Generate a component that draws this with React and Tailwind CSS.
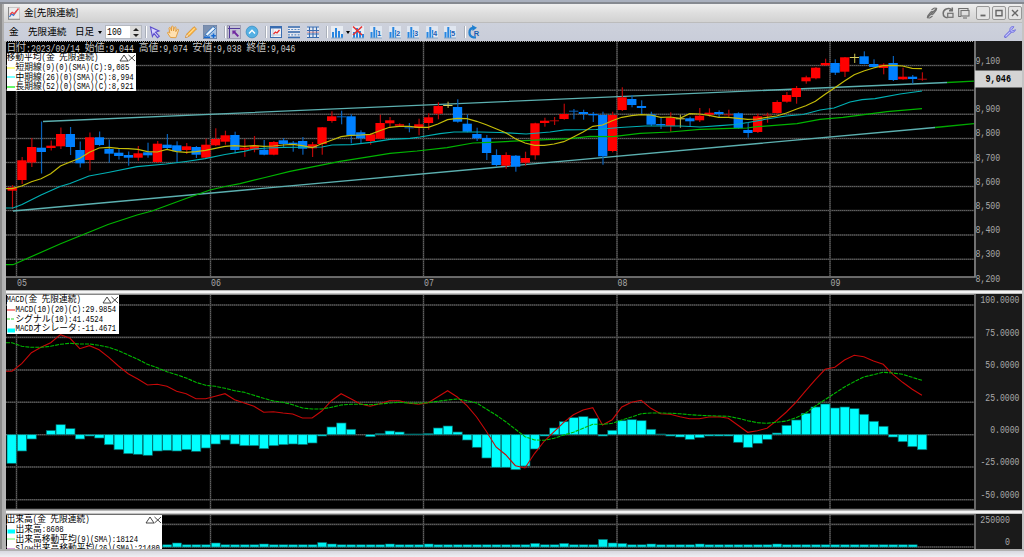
import React from "react";

const STEP = 9.68;
const ZERO = 434.7;
const barX = (i) => 12 + i * STEP;

// [body top, body bottom, high, low, direction]
const CANDLES = [
  [187.3, 190.7, 185, 209, "u"], [160.3, 180, 157, 184, "u"], [147, 162.5, 138, 167, "u"],
  [147.7, 152, 121.5, 173.5, "d"], [145.7, 148, 140.5, 150.5, "u"], [134, 146.3, 127.5, 149, "u"],
  [134, 147, 127, 155, "d"], [150, 163.3, 141.5, 167.5, "d"], [137.3, 160, 132.5, 170.5, "u"],
  [137.3, 145, 131.5, 146, "d"], [149, 153.7, 139.5, 162.7, "d"], [152.7, 156, 148.5, 159.5, "d"],
  [155, 157.7, 151.5, 165.7, "d"], [153.3, 157.7, 146, 160.7, "u"], [152.3, 155.3, 142.7, 157.7, "d"],
  [143.7, 162, 141, 163, "u"], [144.7, 148, 134, 149, "d"], [145.3, 151.3, 141.3, 162.7, "d"],
  [146.3, 150, 143, 154, "u"], [147, 154.7, 146, 158, "d"], [144.7, 157.7, 138.7, 158.3, "u"],
  [139, 145.3, 128.3, 146, "u"], [135.3, 141.7, 130.7, 144.7, "u"], [135, 150, 131.7, 153.3, "d"],
  [147.7, 149.8, 139, 156.8, "u"], [145.7, 149.7, 136, 152.3, "u"], [149.7, 154.7, 140, 155.3, "d"],
  [142, 154.7, 141, 155.3, "u"], [140.3, 144, 138, 148, "d"], [142.7, 144.3, 141, 151.7, "d"],
  [141, 148.7, 137, 154.7, "d"], [144.3, 148.3, 142, 157, "u"], [127.3, 144, 127, 154.7, "u"],
  [116.3, 121, 111.3, 122.7, "u"], [116.3, 117, 110.7, 124.3, "d"], [116.3, 136, 114.3, 143.3, "d"],
  [132.3, 138.3, 130.3, 144, "d"], [134.3, 141, 133.7, 144.7, "u"], [123, 138.7, 114.7, 139.3, "u"],
  [120.3, 123.3, 117, 126.7, "u"], [124.3, 125.7, 123.3, 126.3, "u"], [127.3, 128, 123, 132.3, "d"],
  [124.3, 128, 118.7, 135.3, "u"], [117.3, 123, 113.3, 129.7, "u"], [106, 113.7, 102.3, 119.3, "u"],
  [105, 106, 101.7, 108, "n"], [107, 121.7, 99.3, 122.7, "d"], [123.7, 131.7, 114.3, 132.3, "d"],
  [134, 138.3, 127.7, 141, "d"], [138, 153, 135, 160, "d"], [155, 165, 149.3, 166.7, "d"],
  [155, 165.7, 152.3, 168.7, "u"], [155.7, 166.7, 155, 171.7, "d"], [158, 162.7, 151.7, 165.7, "u"],
  [123.3, 155.3, 122.7, 159.7, "u"], [120.7, 123, 117.7, 126.7, "u"], [120.3, 121, 117, 125, "u"],
  [114, 119, 103.7, 119.7, "u"], [110.7, 111.3, 109, 119.3, "d"], [112, 114, 109.7, 119.7, "d"],
  [114, 115.3, 112, 122, "d"], [115, 156.3, 111.7, 164.7, "d"], [115, 151, 111.7, 152.3, "u"],
  [97.3, 110, 87.3, 111, "u"], [99, 105, 95, 107.3, "d"], [106, 108, 100.3, 114, "d"],
  [114.3, 124.7, 111.7, 126, "d"], [124, 125.3, 118, 129, "d"], [117.7, 126, 112.3, 131.7, "u"],
  [118.3, 119.3, 114.7, 127.7, "n"], [118.3, 121.3, 116.7, 126.7, "d"], [115.7, 120.3, 108, 122, "u"],
  [112.7, 114.7, 108.3, 116.7, "u"], [112, 114, 110.3, 117.3, "d"], [114.3, 115, 109.7, 116.7, "u"],
  [113.3, 128.3, 112.3, 129, "d"], [130, 133, 123, 137.7, "d"], [116.3, 132, 113.7, 133, "u"],
  [114.7, 115.3, 112.7, 122.7, "u"], [102, 113, 100.3, 113.7, "u"], [95, 101.7, 92, 102.7, "u"],
  [88, 97, 86, 103.7, "u"], [77.3, 81.3, 75.7, 83.7, "u"], [67.7, 78.3, 67, 79.3, "u"],
  [63, 65.3, 58.7, 66, "u"], [63, 72.7, 59.3, 75, "d"], [57.3, 71.7, 57, 77, "u"],
  [57, 57.8, 53.7, 63, "n"], [56.3, 64, 51.3, 64.3, "d"], [64, 67, 59.3, 67.7, "d"],
  [64.7, 68, 63.3, 74.3, "u"], [63, 80, 56, 81, "d"], [76.7, 79.3, 67.7, 79.7, "u"],
  [76.7, 79, 75, 83.7, "d"], [78.7, 79.3, 72.3, 80.7, "u"],
];

const SMA9 = [
  188.7, 186, 181.7, 178.7, 173.7, 166, 162, 158.3, 152.3, 148, 147.3, 148.3, 148.7, 149.3, 151.7,
  152, 149.3, 151.7, 152.3, 151.7, 150.3, 148.3, 146.3, 145.7, 146.3, 145.7, 146.3, 146, 145,
  144.3, 145.7, 147.7, 143.7, 140.3, 136.7, 135.3, 135, 134.3, 130.7, 127.3, 126.3, 126.3, 127.3,
  127.3, 124, 119.7, 118.3, 118.7, 121.3, 124.7, 128.7, 132.7, 138.7, 143, 145.3, 145.3, 144,
  141.7, 137, 132, 126.3, 125, 120.7, 117.3, 115.7, 114.7, 115, 117.3, 117, 118.3, 113.7, 114,
  115.3, 117.3, 117.3, 118.3, 119.3, 119, 117.3, 116, 113, 109.3, 105.7, 101.3, 94.3, 87.7, 81,
  74.7, 71, 68, 65.7, 65.3, 66, 68.3, 68.7,
];

const SMA26 =
  "6,208 13,208 22,204.5 41,195 60,186.5 70,183.5 89,176 108,172.5 137,166.7 166,164 186,161.5 205,158.7 225,154.5 244,151.3 254,149 268,148 283,147.3 322,147 332,145 351,144.7 371,142.3 390,139.3 410,138.3 420,137 440,133.7 454,132 480,132 500,132.5 526,134 550,132 565,129.8 596,129.5 620,127.5 645,126 680,126 700,127 720,125.7 735,124.5 748,122.5 767,119 786,116 803,114.5 820,110 834,108 850,102 862,99.7 875,98.7 900,94 922,91";

const SMA52 =
  "6,264.7 13,264.7 60,244 108,224.5 137,215 152,211 186,198.5 210,190 225,186.5 240,183.7 265,177.5 290,171.3 340,161.3 370,156.7 390,153.3 417,151 447,147.7 473,143 490,142.3 530,140.3 570,138.7 590,136.3 613,136.7 640,133.3 670,132 700,129.3 730,128.3 747,128 757,126.7 797,123.7 820,119.3 843,117.3 887,111.7 922,108.7";

const MACD = [
  371.3, 363.7, 352.7, 347.3, 342.7, 334.7, 338.3, 348.7, 345.7, 349.7, 357.3, 366, 373.7, 379,
  385, 384.3, 386.3, 391.3, 393.7, 398.7, 398.7, 396.3, 393.7, 399.7, 403, 406.3, 412.3, 411.7,
  413, 414, 418, 418, 411, 400.7, 393.7, 398.7, 404, 406.3, 403.7, 400.7, 400.7, 403.3, 404.3,
  402.7, 396.7, 390.7, 397, 405.7, 417, 431.3, 447, 454.7, 465.7, 468, 453.3, 441, 431.7, 422.3,
  414.7, 410, 407.7, 425, 419.7, 407, 402.3, 400.3, 408.3, 413.7, 414.3, 416.7, 418.7, 418.7, 417,
  416.7, 418.3, 425.3, 432.3, 430.7, 428.3, 420.5, 412, 402.2, 390.7, 379.7, 369.3, 367.3, 360,
  355.3, 356.7, 361, 364.3, 374.3, 382.3, 389.3, 395.3,
];

const SIGNAL = [
  342.7, 346.3, 347.3, 347.3, 346.3, 344.3, 343.3, 344, 344, 345.3, 347.3, 350.7, 355, 359.3,
  364.3, 367.7, 371.7, 374.7, 378, 382.3, 385.3, 386.3, 388.3, 390.7, 392.3, 395.3, 398.3, 401,
  402.3, 404.7, 408, 409, 409, 407.3, 405, 404.3, 404.3, 404.7, 404, 403, 402.3, 403, 403.3, 402.7,
  401.3, 400, 399, 400.7, 403, 409, 415, 421.7, 429.3, 436.7, 440, 440.3, 438.3, 435, 432.3, 428.3,
  424.3, 424.3, 423.3, 420, 417, 413.7, 413, 413, 413.3, 413.7, 414.7, 415.3, 415.7, 416, 416.3,
  418.3, 420.7, 422.7, 423.3, 422.3, 421, 417.7, 413, 406, 399.7, 393.3, 387, 381.7, 377, 374.7,
  372.3, 373, 374.3, 377.3, 380.3,
];

const OSC = [
  463.3, 451, 439, 434.7, 430.5, 424.7, 428.7, 439, 436, 438, 444.7, 449.7, 453.7, 454.3, 455.3,
  451, 450.3, 451, 449.7, 451.3, 448, 444, 440, 444, 445.7, 445.7, 448.7, 445.7, 444.7, 444, 444.5,
  443, 436, 427, 423, 429.3, 434.7, 436.7, 433.7, 431, 432, 434, 434, 433.7, 428, 426, 432, 440,
  447.3, 458, 467.3, 467.3, 469.7, 466, 449, 436, 428, 421.7, 417.7, 416.7, 418.3, 436, 430.3,
  420.7, 419.7, 420.7, 429.3, 434, 436, 437, 439.3, 437.7, 436, 436, 436, 442.3, 447.3, 443.3,
  439.3, 433, 425.3, 420, 413.3, 407, 404, 408, 407, 408.7, 414.3, 421.3, 426.3, 437, 441.7, 446.7,
  449.7,
];

const VOLUME_PEAKS = { 17: 4, 21: 4, 26: 3, 32: 4.5, 33: 3, 39: 3, 43: 3, 54: 3.6, 57: 3.6, 61: 7.6, 62: 4, 63: 3.5, 66: 3, 71: 3, 79: 3 };

const MONTHS = [
  [16.5, "05"],
  [210.5, "06"],
  [423.5, "07"],
  [617, "08"],
  [830, "09"],
];

const BODY = { u: "#ff0000", d: "#0080ff", n: "#d8d060" };
const WICK = { u: "#b80808", d: "#0860b8", n: "#a8a040" };

const toPoints = (ys) =>
  "6," + ys[0] + " " + ys.map((y, i) => `${barX(i).toFixed(1)},${y}`).join(" ");

const Grid = ({ rows, top, bottom }) => (
  <g>
    {rows.map((y) => (
      <g key={y}>
        <line x1="6" x2="974" y1={y} y2={y} stroke="#3a3a3a" strokeWidth="1.6" />
        <line x1="6" x2="974" y1={y} y2={y} stroke="#606060" strokeWidth="1" strokeDasharray="1 1" />
      </g>
    ))}
    {MONTHS.map(([x]) => (
      <g key={x}>
        <line x1={x} x2={x} y1={top} y2={bottom} stroke="#3a3a3a" strokeWidth="1.6" />
        <line x1={x} x2={x} y1={top} y2={bottom} stroke="#606060" strokeWidth="1" strokeDasharray="1 1" />
      </g>
    ))}
  </g>
);

const AxisText = ({ x, y, children, fill = "#a8a8a8", bold, unit = 4.95 }) => (
  <text
    x={x}
    y={y}
    fill={fill}
    fontSize="11"
    fontWeight={bold ? 700 : 400}
    fontFamily="'Liberation Mono', monospace"
    textLength={children.length * unit}
    lengthAdjust="spacingAndGlyphs"
  >
    {children}
  </text>
);

// Half-width runs take exactly half of a full-width character
const Mixed = ({ children, half }) =>
  children.split(/([ -~]+)/).map((part, i) =>
    /^[ -~]+$/.test(part) ? (
      <span key={i} className={half}>
        {part}
      </span>
    ) : (
      <span key={i}>{part}</span>
    )
  );

const LegendText = ({ children }) => (
  <span className="whitespace-pre">
    <Mixed half="inline-block scale-y-[1.25] font-['Liberation_Mono',monospace] text-[7.3px]">{children}</Mixed>
  </span>
);

const Legend = ({ title, rows, className }) => (
  <div
    className={
      "absolute left-[0.5px] bg-white font-['Noto_Sans_CJK_JP',sans-serif] text-[8.76px] text-black " +
      className
    }
  >
    <div className="flex h-[9.7px] items-center justify-between leading-none">
      <LegendText>{title}</LegendText>
      <svg width="17" height="8" viewBox="0 0 17 8" fill="none" stroke="#333" strokeWidth="0.9">
        <path d="M1 7 5 1l4 6zM9.5 1l6.5 6M16 1 9.5 7" />
      </svg>
    </div>
    {rows.map(([kind, color, text]) => (
      <div key={text} className="flex h-[9.7px] items-center leading-none">
        <svg className="mr-[1px] shrink-0" width="8" height="8" viewBox="0 0 8 8">
          {kind === "bar" ? (
            <rect x="0.5" y="3.5" width="7.5" height="4" fill={color} />
          ) : (
            <path d="M0 4h8" stroke={color} strokeWidth="1.2" strokeDasharray={kind === "dash" ? "3 1" : undefined} />
          )}
        </svg>
        <LegendText>{text}</LegendText>
      </div>
    ))}
  </div>
);

const PriceChart = () => (
  <div className="relative h-[249px] bg-[#1a1a1a]">
    <svg className="block" width="1016" height="249" viewBox="6 41 1016 249">
      <rect x="6" y="41" width="968" height="236" fill="#000" />
      <Grid rows={[65.5, 90.2, 114.3, 138.5, 162.5, 186.5, 210.5, 235, 259.3]} top={41} bottom={276} />
      <path d="M6 41.5h968" stroke="#aaa" strokeDasharray="1 1" />
      <path d="M43 121.5 947 82.5M13 211l922-83.5" stroke="#5cb0b0" strokeWidth="1.3" />
      <path d="M947 82.5l27-1.3M935 127.5l39-3.8" stroke="#00a800" strokeWidth="1.3" />
      {CANDLES.map(([top, bottom, high, low, dir], i) => (
        <g key={i}>
          <rect x={barX(i) - 0.1} y={high} width="1.2" height={low - high} fill={WICK[dir]} />
          <rect
            x={barX(i) - 4.7 < 6 ? 6 : barX(i) - 4.4}
            y={top}
            width="9.3"
            height={Math.max(bottom - top, 1)}
            fill={bottom - top < 1.1 && dir !== "n" ? WICK[dir] : BODY[dir]}
          />
        </g>
      ))}
      <g fill="none" strokeWidth="1.2">
        <polyline points={SMA52} stroke="#00b400" />
        <polyline points={SMA26} stroke="#00b0b4" />
        <polyline points={toPoints(SMA9)} stroke="#c4bc08" />
      </g>
      <path d="M6 277h969V41" fill="none" stroke="#888" strokeWidth="1.6" />
      {MONTHS.map(([x, label]) => (
        <AxisText key={label} x={x + 0.5} y={285.5}>
          {label}
        </AxisText>
      ))}
      {["9,100", "", "8,900", "8,800", "8,700", "8,600", "8,500", "8,400", "8,300", "8,200"].map(
        (label, i) =>
          label && (
            <AxisText key={label} x={975.5} y={63.7 + i * 24.2}>
              {label}
            </AxisText>
          )
      )}
      <rect x="975" y="70.5" width="47" height="17" fill="#d4d4d4" />
      <AxisText x={985.5} y={82} fill="#000" bold unit={5.1}>
        9,046
      </AxisText>
    </svg>
    <div className="absolute top-[1px] left-[0.5px] font-['Noto_Sans_CJK_JP',sans-serif] text-[9.8px] leading-[11px] whitespace-pre text-[#c8c8c8]">
      <Mixed half="inline-block scale-y-[1.25] font-['Liberation_Mono',monospace] text-[8.17px]">
        日付:2023/09/14 始値:9,044 高値:9,074 安値:9,038 終値:9,046
      </Mixed>
    </div>
    <Legend
      className="top-[12px] h-[38px] w-[129px]"
      title="移動平均(金 先限連続)"
      rows={[
        ["line", "#ffff40", "短期線(9)(0)(SMA)(C):9,085"],
        ["line", "#20ffff", "中期線(26)(0)(SMA)(C):8,994"],
        ["line", "#00f000", "長期線(52)(0)(SMA)(C):8,921"],
      ]}
    />
  </div>
);

const MacdChart = () => (
  <div className="relative h-[216px] bg-[#1a1a1a]">
    <svg className="block" width="1016" height="216" viewBox="6 294 1016 216">
      <rect x="6" y="294" width="968" height="216" fill="#000" />
      <Grid rows={[305, 337.4, 370, 402.2, 434.7, 467, 499.7]} top={295} bottom={509} />
      <path d="M6 294.5h968" stroke="#888" />
      {OSC.map((y, i) => (
        <rect
          key={i}
          x={i === 0 ? 7 : barX(i) - 4.4}
          y={Math.min(y, ZERO)}
          width="9.3"
          height={Math.abs(y - ZERO)}
          fill="#00ffff"
          stroke="#006c6c"
          strokeWidth="0.7"
        />
      ))}
      <g fill="none" strokeWidth="1.1">
        <polyline points={toPoints(MACD)} stroke="#c80808" />
        <polyline points={toPoints(SIGNAL)} stroke="#00b800" strokeDasharray="4 1" />
      </g>
      <path d="M6 509.5h968M975 294v216" fill="none" stroke="#888" strokeWidth="1.4" />
      {["100.0000", "75.0000", "50.0000", "25.0000", "0.0000", "-25.0000", "-50.0000"].map((label, i) => (
        <AxisText key={label} x={1019.5 - label.length * 4.88} y={303.3 + i * 32.4} unit={4.88}>
          {label}
        </AxisText>
      ))}
    </svg>
    <Legend
      className="top-[1px] h-[38.5px] w-[112px]"
      title="MACD(金 先限連続)"
      rows={[
        ["line", "#f04040", "MACD(10)(20)(C):29.9854"],
        ["dash", "#30d830", "シグナル(10):41.4524"],
        ["bar", "#00ffff", "MACDオシレータ:-11.4671"],
      ]}
    />
  </div>
);

const VolumeChart = () => (
  <div className="relative h-[35px] overflow-hidden bg-[#1a1a1a]">
    <svg className="block" width="1016" height="35" viewBox="6 514 1016 35">
      <rect x="6" y="514" width="968" height="35" fill="#000" />
      <Grid rows={[524.4, 547]} top={515} bottom={547} />
      <path d="M6 514.7h968" stroke="#888" />
      {Array.from({ length: 94 }, (_, i) => {
        const h = VOLUME_PEAKS[i] || 2.2;
        return (
          <rect key={i} x={barX(i) - 4} y={547 - h} width="8.9" height={h} fill="#00f0f0" stroke="#006c6c" strokeWidth="0.6" />
        );
      })}
      <path d="M975 514v35" stroke="#888" strokeWidth="1.4" />
      <AxisText x={980.3} y={522.9}>250000</AxisText>
      <AxisText x={1005} y={545.4}>0</AxisText>
    </svg>
    <Legend
      className="top-[1px] h-[34px] w-[155px]"
      title="出来高(金 先限連続)"
      rows={[
        ["bar", "#00ffff", "出来高:8608"],
        ["line", "#80ff80", "出来高移動平均(9)(SMA):18124"],
        ["line", "#c060c0", "Slow出来高移動平均(26)(SMA):21480"],
      ]}
    />
  </div>
);

const Icon = ({ children, className = "" }) => (
  <div className={"flex w-[18.4px] shrink-0 items-center justify-center " + className}>
    <svg width="14" height="14" viewBox="0 0 14 14" fill="none">
      {children}
    </svg>
  </div>
);

const Separator = () => <div className="h-[12px] w-[1.5px] shrink-0 border-l border-[#aab0ba] bg-white" />;

const Bars = () => (
  <>
    <rect x="1" y="1" width="12" height="12" fill="#e8ecf2" />
    <path d="M2 13V7h2v6zM5 13V3h2v10zM8 13V6h2v7zM11 13V9h2v4z" fill="#2886e0" />
    <path d="M1 13h12" stroke="#88a8c8" />
  </>
);

const Toolbar = () => (
  <div className="flex h-[18px] items-center bg-gradient-to-b from-[#cdd1dc] to-[#c9cdd9] font-['Noto_Sans_CJK_JP',sans-serif] text-[9.6px] leading-none text-black">
    <span className="ml-[5px] w-[19px]">金</span>
    <span className="w-[47px]">先限連続</span>
    <span className="w-[23px]">日足</span>
    <span className="h-0 w-0 border-x-[2.5px] border-t-[3px] border-x-transparent border-t-black" />
    <div className="ml-[3px] flex h-[14px] w-[37px] items-center justify-between border border-[#b4b8c0] bg-white pl-[1px]">
      <span className="inline-block scale-y-[1.35] font-['Liberation_Mono',monospace] text-[8.2px]">100</span>
      <span className="flex h-full w-[11px] flex-col items-center justify-center gap-[3px] bg-[#dcdcdc]">
        <span className="border-x-[3px] border-b-[3px] border-x-transparent border-b-[#222]" />
        <span className="border-x-[3px] border-t-[3px] border-x-transparent border-t-[#222]" />
      </span>
    </div>
    <div className="ml-[3px]"><Separator /></div>
    <Icon className="-ml-[1px]">
      <path d="M2.5 2l8.5 4-3.5 1.2 3.8 4-1.8 1.5-3.5-4.2-1.6 3z" fill="#d8d4ff" stroke="#5a4ccc" strokeWidth="1.1" />
    </Icon>
    <Icon>
      <path d="M4.5 12.5 1.5 8c0-1.2 1.5-1 2.3.2L3 3.2c.2-1 1.4-.8 1.6 0L5.5 6V1.7c.3-.9 1.5-.8 1.7 0L7.5 6l1-3.7c.4-.8 1.5-.5 1.5.4L9.8 6.6l1.5-2.2c.7-.6 1.6 0 1.2.8L10.5 11l-.6 1.7z" fill="#ffe0b0" stroke="#e09838" strokeWidth="0.9" />
    </Icon>
    <Icon>
      <path d="M1.5 12.5 2.8 9 10 1.7l2.5 2.2-7.2 7.3z" fill="#ffc050" stroke="#d88820" strokeWidth="0.8" />
      <path d="M1.5 12.5l1.2-3.2 2.3 2z" fill="#fff" stroke="#c88840" strokeWidth="0.6" />
      <path d="m4.2 9.7 6.3-6.4" stroke="#ffe0a0" strokeWidth="1" />
    </Icon>
    <Icon>
      <rect x="0.2" y="0.2" width="13.6" height="13.6" fill="#7c90b0" stroke="#60789c" strokeWidth="0.6" />
      <path d="M1 13h12V2z" fill="#a8c4e4" />
      <path d="M2 9.5 10 1.5l2.5 2L4.5 11z" fill="#e8f4ff" stroke="#2068b8" strokeWidth="0.9" />
      <path d="M1 12.2h6M10.5 8.5v4.5M8.3 10.8h4.5" stroke="#1468d0" strokeWidth="1.5" />
    </Icon>
    <div className="ml-[5px]"><Separator /></div>
    <Icon className="-ml-[1px]">
      <rect x="0.5" y="0.5" width="13" height="13" fill="#c4c2d4" stroke="#a0a0b4" />
      <path d="M2.5 1v12M1 3.5h12" stroke="#503898" strokeWidth="1" />
      <path d="M5.3 5.5h4.2L8.3 6.8l3.7 3.9-1.4 1.3L7 8.2 5.5 9.5z" fill="#7028a0" />
    </Icon>
    <Icon>
      <circle cx="7" cy="7" r="5.9" fill="#54b0e4" stroke="#3c90c4" strokeWidth="0.8" />
      <path d="M4 8.5 7 5.3l3 3.2" stroke="#fff" strokeWidth="1.4" />
    </Icon>
    <div className="ml-[4px]"><Separator /></div>
    <Icon>
      <rect x="1.5" y="1.5" width="11" height="11" fill="#f0f2f8" stroke="#386cb0" />
      <path d="M1 2.5h12" stroke="#386cb0" strokeWidth="2" />
      <path d="M4 4v8M2 10h10" stroke="#a8b8d0" strokeWidth="0.7" />
      <path d="m4.5 9 2-2 1.5 1L10.5 5" stroke="#e83030" strokeWidth="1.3" />
    </Icon>
    <Icon>
      <path d="M1 2h12M1 7h12M1 12.5h12" stroke="#386cb0" strokeWidth="1.3" />
      <path d="M1 4.5h12M1 9.8h12" stroke="#f2f4fa" strokeWidth="2.4" />
      <path d="M1 4.5h12M1 9.8h12" stroke="#5a88c0" strokeWidth="1.2" strokeDasharray="2 1.2" />
    </Icon>
    <Icon>
      <rect x="1" y="1.5" width="12" height="11" fill="#e4eaf4" />
      <path d="M1 2h12M1 5.5h12M1 9h12M1 12.5h12M3.5 1.5v11M7 1.5v11M10.5 1.5v11" stroke="#386cb0" strokeWidth="1.1" />
      <path d="M1 7.2h12" stroke="#d07070" strokeWidth="0.7" />
    </Icon>
    <div className="ml-[4px]"><Separator /></div>
    <Icon>
      <Bars />
    </Icon>
    <span className="mr-[1px] h-0 w-0 border-x-[2.5px] border-t-[3px] border-x-transparent border-t-black" />
    <Icon className="-ml-[2px]">
      <Bars />
      <path d="m2 1.5 9 8.5M11 1.5 2 10" stroke="#e83030" strokeWidth="1.6" />
    </Icon>
    {["1", "2", "3", "4", "5"].map((n) => (
      <Icon key={n}>
        <rect x="1" y="1" width="12" height="12" fill="#e0e6f0" />
        <path d="M1.5 13V7h2v6zM4.3 13V2h2v11zM7 13V5h1.3v8z" fill="#2886e0" />
        <path d="M1 13h12" stroke="#88a8c8" />
        <text x="8" y="11" fontSize="7.5" fontWeight="700" fill="#1c60b8" stroke="#e0e6f0" strokeWidth="1.2" paintOrder="stroke" fontFamily="'Liberation Sans', sans-serif">
          {n}
        </text>
      </Icon>
    ))}
    <div className="ml-[5px]"><Separator /></div>
    <Icon className="-ml-[1px]">
      <path d="M6 3C1.5 3.5 1 11.5 6.5 12.3H9" stroke="#2080d0" strokeWidth="2.3" />
      <path d="m5 0 5 2.8L5.5 6z" fill="#2080d0" />
      <text x="6.8" y="10.8" fontSize="7.5" fontWeight="700" fill="#1860b0" fontFamily="'Liberation Sans', sans-serif">
        R
      </text>
    </Icon>
    <Icon className="mr-[3px] ml-auto">
      <path d="M2.5 11.5 7.5 6.7" stroke="#7070dc" strokeWidth="3" strokeLinecap="round" />
      <path d="M2.5 11.5 7.5 6.7" stroke="#c8c8ff" strokeWidth="1.1" />
      <path d="M11 1.8C8.5.8 6.3 3 7 5.5c.8 2.5 4.6 2.7 5.5-.8L10 5.8 8.8 4.5z" fill="#b4b4fa" stroke="#7070dc" strokeWidth="0.9" />
    </Icon>
  </div>
);

const WindowButton = ({ children, className }) => (
  <div className={"flex h-[14px] items-center justify-center rounded-[2px] border border-[#989898] bg-[#e4e4e4] " + className}>
    <svg width="10" height="10" viewBox="0 0 10 10" fill="none" stroke="#666" strokeWidth="1.4">
      {children}
    </svg>
  </div>
);

const TitleBar = () => (
  <div className="flex h-[18px] items-center bg-gradient-to-b from-[#efefef] via-[#dedede] to-[#d2d2d2]">
    <svg className="ml-[4px]" width="12" height="13" viewBox="0 0 12 13" fill="none">
      <rect x="0.5" y="0.5" width="11" height="12" fill="#ececec" stroke="#b8b8b8" strokeWidth="0.7" />
      <path d="M.5 0v12.3H12" stroke="#888" strokeWidth="1.1" />
      <path d="m1.5 10 2-3 2 1.3 3-4.5" stroke="#3878d0" strokeWidth="1.3" />
      <path d="m2 7.5 2.2-2.2 2 1.5L10.5 1.5" stroke="#f04040" strokeWidth="1.3" />
    </svg>
    <span className="ml-[4px] font-['Noto_Sans_CJK_JP',sans-serif] text-[9.6px] leading-none text-black">
      金[先限連続]
    </span>
    <div className="ml-auto flex items-center">
      <svg width="12" height="12" viewBox="0 0 12 12" fill="none" stroke="#707070" strokeWidth="1.2">
        <path d="M5.5 3 8 1.2c2-.7 3 .8 2 2.3L7.5 6.7C6.5 7.8 5 7.5 4.8 6.3M6.5 9 4 10.8c-2 .7-3-.8-2-2.3l2.5-3.2c1-1.1 2.5-.8 2.7.4M1 11 11 1" />
      </svg>
      <svg className="ml-[4px]" width="12" height="12" viewBox="0 0 12 12" fill="none" stroke="#707070" strokeWidth="1.5">
        <path d="M9.5 2.8C6.5.3 1.2 2 1.2 6.3c0 2.6 1.8 4.4 4.3 4.4M10.3.5v3.3H7" />
        <rect x="5.7" y="6.3" width="5.3" height="4" strokeWidth="1.2" />
      </svg>
      <svg className="ml-[4px]" width="12" height="12" viewBox="0 0 12 12" fill="none" stroke="#707070" strokeWidth="1.1">
        <path d="M3 9.5H.7v-8H10V3" />
        <rect x="3" y="3.5" width="8" height="5.5" />
        <path d="M5 11h4" />
      </svg>
      <WindowButton className="ml-[6px] w-[14px]">
        <path d="M2.5 7.5h5" strokeWidth="1.8" />
      </WindowButton>
      <WindowButton className="ml-[2px] w-[14px]">
        <path d="M2 2.5h6v5.3H2z" />
      </WindowButton>
      <WindowButton className="ml-[2px] w-[14px]">
        <path d="m2 2 6 6M8 2 2 8" />
      </WindowButton>
    </div>
  </div>
);

const Divider = () => (
  <div className="h-[4px] border-t border-[#b8b8b8] bg-gradient-to-b from-[#f4f4f4] from-50% to-[#a8a8a8]" />
);

const App = () => {
  return (
    <div className="flex h-[557px] w-[1024px] flex-col overflow-hidden bg-[#b4b4b4]">
      <div className="h-[4px] shrink-0 border-b-2 border-[#858990] bg-[#a9b0be]" />
      <div className="flex h-[545px] shrink-0 border-l-2 border-[#8c8c8c]">
        <div className="w-[2px] bg-[#b0b0b0]" />
        <div className="w-[1018px]">
          <TitleBar />
          <div className="border-t border-[#bcbcbc]">
            <Toolbar />
          </div>
          <div className="ml-[2px] w-[1016px]">
            <PriceChart />
            <Divider />
            <MacdChart />
            <Divider />
            <VolumeChart />
          </div>
        </div>
        <div className="w-[2px] bg-[#c4c4c4]" />
      </div>
      <div className="flex-1 border-t-2 border-[#b0b0b0] bg-gradient-to-b from-[#d8d8e0] to-[#f0f0f4]" />
    </div>
  );
};

export default App;
